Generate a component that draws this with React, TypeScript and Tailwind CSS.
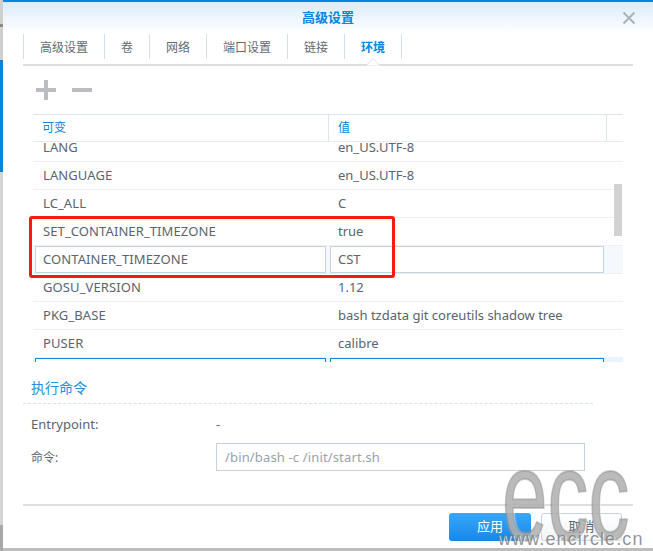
const rows = [
  { name: 'LANG', value: 'en_US.UTF-8' },
  { name: 'LANGUAGE', value: 'en_US.UTF-8' },
  { name: 'LC_ALL', value: 'C' },
  { name: 'SET_CONTAINER_TIMEZONE', value: 'true' },
  { name: 'CONTAINER_TIMEZONE', value: 'CST', editing: true },
  { name: 'GOSU_VERSION', value: '1.12' },
  { name: 'PKG_BASE', value: 'bash tzdata git coreutils shadow tree' },
  { name: 'PUSER', value: 'calibre' },
];

const tabs = [
  { label: '高级设置', width: 'w-[81px]' },
  { label: '卷', width: 'w-[45px]' },
  { label: '网络', width: 'w-[57px]' },
  { label: '端口设置', width: 'w-[81px]' },
  { label: '链接', width: 'w-[57px]' },
];

function Tabs() {
  return (
    <div className="mx-[20px] mt-px flex h-[32px] border-b-2 border-[#dcdee0] pb-[5px]">
      {tabs.map(tab => (
        <div
          key={tab.label}
          className={`${tab.width} flex h-[25px] items-center justify-center border-l border-[#d5dfea] pt-[2px] text-[#5f6a74]`}
        >
          {tab.label}
        </div>
      ))}
      <div className="relative flex h-[25px] w-[58px] items-center justify-center border-x border-[#d5dfea] pt-[2px] font-bold text-[#0086e5]">
        环境
        <svg className="absolute top-[24px] left-[21px]" width="14" height="8" viewBox="0 0 14 8">
          <path d="M0 7.5 L7 0.5 L14 7.5" fill="#fff" stroke="#dcdee0" strokeWidth="1" />
        </svg>
      </div>
    </div>
  );
}

function EnvRow({ name, value, editing }: { name: string; value: string; editing?: boolean }) {
  const box = editing ? 'border-[#c4d2e2] bg-white' : 'border-transparent';
  return (
    <div className={`flex h-[28px] shrink-0 border-b border-[#eef0f2] text-[13px] text-[#5a646e] ${editing ? 'bg-[#f5f9fe]' : ''}`}>
      <div className="flex w-[295px] items-center pl-[2px]">
        <div className={`flex h-[27px] w-[291px] items-center border pl-[7px] tracking-[0.1px] ${box}`}>{name}</div>
      </div>
      <div className="flex items-center pl-[2px]">
        <div className={`flex h-[27px] w-[274px] items-center border pl-[7px] ${box}`}>{value}</div>
      </div>
    </div>
  );
}

function EnvTable() {
  return (
    <div className="relative mx-[30px] w-[590px]">
      <div className="flex h-[28px] border-y border-[#dce4f0] border-b-[#e8ebee] text-[#0086e5]">
        <div className="flex w-[295px] items-center pl-[9px]">可变</div>
        <div className="flex w-[278px] items-center border-l border-[#dce4f0] pl-[9px]">值</div>
        <div className="border-l border-[#dce4f0]" />
      </div>
      <div className="h-[220px] overflow-hidden">
        <div className="-mt-[8px] flex flex-col">
          {rows.map(row => (
            <EnvRow key={row.name} {...row} />
          ))}
          <div className="flex h-[28px] bg-[#eaf4fe]">
            <div className="ml-[2px] h-[27px] w-[291px] border border-[#0a8ae6] bg-white" />
            <div className="ml-[4px] h-[27px] w-[274px] border border-[#0a8ae6] bg-white" />
          </div>
        </div>
      </div>
      {/* scrollbar */}
      <div className="absolute top-[70px] right-px h-[52px] w-[8px] bg-[#d2d2d2]" />
    </div>
  );
}

function ExecSection() {
  return (
    <div className="mx-[20px] mt-[16px] text-[13px]">
      <div className="w-[570px] border-b border-dashed border-[#d5e2f0] pb-[5px] pl-[8px] text-[14px] leading-[20px] text-[#1a8fe3]">
        执行命令
      </div>
      <div className="mt-[11px] flex h-[20px] items-center pl-[8px] text-[#5a646e]">
        <span className="w-[185px]">Entrypoint:</span>
        <span>-</span>
      </div>
      <div className="mt-[8px] flex h-[28px] items-center pl-[8px] text-[#5a646e]">
        <span className="w-[185px] pt-[2px] text-[12px]">命令:</span>
        <div className="flex h-[28px] w-[369px] items-center border border-[#c4d2e2] pt-[2px] pl-[8px] tracking-[0.15px] text-[#9aa2aa]">
          /bin/bash -c /init/start.sh
        </div>
      </div>
    </div>
  );
}

function Watermark() {
  return (
    <div className="pointer-events-none absolute right-0 bottom-0 h-[85px] w-[156px] overflow-hidden">
      <div className="absolute top-[-34px] left-[5px] origin-top-left scale-x-[0.64] font-['Liberation_Sans',sans-serif] text-[128px] leading-[128px] text-[#8c8c8c]/60 [-webkit-text-stroke:2px_rgba(140,140,140,0.45)] [text-shadow:2px_1px_2px_rgba(255,255,255,0.7)]">
        ecc
      </div>
      <div className="absolute bottom-[2px] left-px font-['Liberation_Sans',sans-serif] text-[18px] leading-[20px] tracking-[1.1px] whitespace-nowrap text-[#777]/80 [text-shadow:1px_1px_1px_rgba(255,255,255,0.9)]">
        www.encircle.cn
      </div>
    </div>
  );
}

export default function App() {
  return (
    <div className="relative flex h-[551px] w-[653px] overflow-hidden bg-[#bdbdbd] font-['Noto_Sans','Noto_Sans_CJK_SC',sans-serif] text-[12px]">
      {/* page behind the dialog */}
      <div className="flex w-[3px] shrink-0 flex-col">
        <div className="h-[24px] bg-[#cfcfcf]" />
        <div className="h-[3px] bg-[#8a8a8a]" />
        <div className="h-[33px] bg-[#cfcfcf]" />
        <div className="h-[112px] bg-[#0a84d8]" />
        <div className="h-[353px] bg-[#d4d4d4]" />
        <div className="flex-1 bg-[#a8a8a8]" />
      </div>

      <div className="flex h-[548px] w-[650px] flex-col border-t-2 border-[#0086e5] bg-white">
        <div className="relative flex h-[31px] shrink-0 items-center justify-center bg-gradient-to-b from-[#dbecfa] to-white pt-px text-[13px] font-bold text-[#0086e5]">
          高级设置
          <svg className="absolute top-[9px] right-[17px]" width="14" height="14" viewBox="0 0 14 14">
            <path d="M1.5 1.5 L12.5 12.5 M12.5 1.5 L1.5 12.5" stroke="#a9b2ba" strokeWidth="2" />
          </svg>
        </div>

        <Tabs />

        {/* add / remove */}
        <div className="flex h-[48px] shrink-0 items-center gap-[16px] pl-[33px]">
          <svg width="20" height="20" viewBox="0 0 20 20">
            <path d="M0 10 H20 M10 0 V20" stroke="#b9bcc0" strokeWidth="4" />
          </svg>
          <svg width="20" height="20" viewBox="0 0 20 20">
            <path d="M0 10 H20" stroke="#b9bcc0" strokeWidth="4" />
          </svg>
        </div>

        <EnvTable />
        <ExecSection />

        <div className="mx-[20px] mt-[33px] h-[2px] bg-[#dedfe0]" />

        <div className="mt-[7px] flex justify-end gap-[10px] pr-[31px] text-[13px]">
          <div className="flex h-[28px] w-[82px] items-center justify-center rounded-[3px] bg-gradient-to-b from-[#38a6f8] to-[#1488e8] text-white">
            应用
          </div>
          <div className="flex h-[28px] w-[81px] items-center justify-center rounded-[3px] border border-[#c8d4e2] bg-gradient-to-b from-white to-[#f0f4f8] text-[#5a646e]">
            取消
          </div>
        </div>
      </div>

      {/* highlight drawn over the table */}
      <div className="absolute top-[216px] left-[29px] h-[62px] w-[366px] rounded-[3px] border-[3px] border-[#fb1a10]" />

      <Watermark />
    </div>
  );
}
